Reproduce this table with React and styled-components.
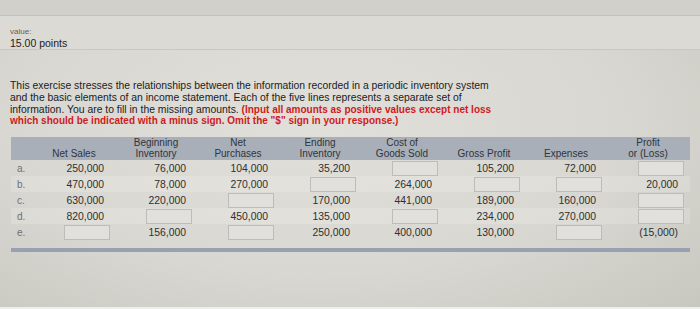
import React from "react";
import styled, { createGlobalStyle } from "styled-components";

const Global = createGlobalStyle`
  html, body { margin: 0; padding: 0; }
  body { font-family: "Liberation Sans", Arial, sans-serif; }
`;

const Page = styled.div`
  width: 700px;
  height: 309px;
  overflow: hidden;
  display: flex;
  flex-direction: column;
  background: radial-gradient(ellipse 80% 90% at 45% 40%, #e1dfd9 0%, #d9d7d1 55%, #c6c5be 100%);
  border-bottom: 2px solid #eeeeec;
  box-sizing: border-box;
`;

const TopStrip = styled.div`
  height: 15px;
  flex: none;
  background: #d2d0cb;
  border-bottom: 1px solid #c3c1bc;
`;

const ValueBlock = styled.div`
  height: 34px;
  flex: none;
  box-sizing: border-box;
  padding: 11px 0 0 10px;
  border-bottom: 1px solid #c9c7c2;
  background: #dcdad5;
`;

const ValueLabel = styled.div`
  font-size: 8px;
  line-height: 10px;
  color: #5d5e60;
`;

const Points = styled.div`
  font-size: 10.5px;
  line-height: 12px;
  color: #1f2023;
`;

const Intro = styled.p`
  margin: 30px 0 0 10px;
  font-size: 10.4px;
  line-height: 11.8px;
  color: #202124;
`;

const Warn = styled.span`
  color: #cf1a22;
  font-weight: bold;
  font-size: 10px;
`;

const Table = styled.div`
  margin: 10px 0 0 11px;
  width: 679px;
  display: flex;
  flex-direction: column;
`;

const Row = styled.div`
  display: grid;
  grid-template-columns: 17px repeat(8, 82px);
  padding-right: 6px;
  height: ${(p) => (p.$head ? "23px" : "16px")};
  align-items: ${(p) => (p.$head ? "end" : "center")};
  background: ${(p) =>
    p.$head ? "#a9afb9" : p.$stripe ? "rgba(255,255,255,0.16)" : "transparent"};
  padding-bottom: ${(p) => (p.$head ? "1px" : "0")};
  box-sizing: border-box;
`;

const HeadCell = styled.div`
  text-align: center;
  padding-left: 10px;
  font-size: 10px;
  line-height: 11px;
  color: #30343a;
`;

const Letter = styled.div`
  padding-left: 6px;
  font-size: 10px;
  color: #6e7177;
  white-space: nowrap;
`;

const Cell = styled.div`
  display: flex;
  justify-content: flex-end;
  align-items: center;
  height: 16px;
`;

const Num = styled.span`
  padding-right: 6px;
  font-size: 10.4px;
  color: #2e2f31;
`;

const Box = styled.input`
  width: 46px;
  height: 15px;
  box-sizing: border-box;
  margin: 0;
  padding: 0;
  background: #e1e0dc;
  border: 1px solid #bdbcb7;
  border-radius: 0;
  outline: none;
`;

const Rule = styled.div`
  margin-top: 8px;
  height: 4px;
  background: #98a1b0;
`;

const headers = [
  ["Net Sales"],
  ["Beginning", "Inventory"],
  ["Net", "Purchases"],
  ["Ending", "Inventory"],
  ["Cost of", "Goods Sold"],
  ["Gross Profit"],
  ["Expenses"],
  ["Profit", "or (Loss)"],
];

const rows = [
  ["a.", ["250,000", "76,000", "104,000", "35,200", null, "105,200", "72,000", null]],
  ["b.", ["470,000", "78,000", "270,000", null, "264,000", null, null, "20,000"]],
  ["c.", ["630,000", "220,000", null, "170,000", "441,000", "189,000", "160,000", null]],
  ["d.", ["820,000", null, "450,000", "135,000", null, "234,000", "270,000", null]],
  ["e.", [null, "156,000", null, "250,000", "400,000", "130,000", null, "(15,000)"]],
];

export default function App() {
  return (
    <>
      <Global />
      <Page>
        <TopStrip />
        <ValueBlock>
          <ValueLabel>value:</ValueLabel>
          <Points>15.00 points</Points>
        </ValueBlock>
        <Intro>
          This exercise stresses the relationships between the information recorded in a periodic inventory system
          <br />
          and the basic elements of an income statement. Each of the five lines represents a separate set of
          <br />
          information. You are to fill in the missing amounts.{" "}
          <Warn>
            (Input all amounts as positive values except net loss
            <br />
            which should be indicated with a minus sign. Omit the "$" sign in your response.)
          </Warn>
        </Intro>
        <Table>
          <Row $head>
            <div />
            {headers.map((h, i) => (
              <HeadCell key={i}>
                {h.map((line, j) => (
                  <div key={j}>{line}</div>
                ))}
              </HeadCell>
            ))}
          </Row>
          {rows.map(([label, vals], r) => (
            <Row key={label} $stripe={r % 2 === 1}>
              <Letter>{label}</Letter>
              {vals.map((v, i) => (
                <Cell key={i}>{v === null ? <Box type="text" readOnly /> : <Num>{v}</Num>}</Cell>
              ))}
            </Row>
          ))}
          <Rule />
        </Table>
      </Page>
    </>
  );
}
